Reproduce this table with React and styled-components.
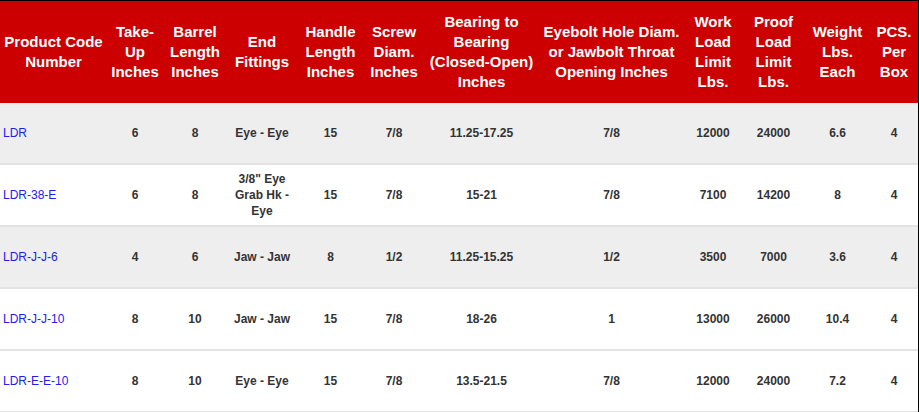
import React from "react";
import styled, { createGlobalStyle } from "styled-components";

const GlobalStyle = createGlobalStyle`
  html, body {
    margin: 0;
    padding: 0;
    background: #ffffff;
  }
  body {
    font-family: "Liberation Sans", Arial, sans-serif;
  }
`;

const widths = [107, 56, 64, 70, 67, 60, 115, 145, 58, 63, 65, 48];

const headers = [
  ["Product Code", "Number"],
  ["Take-", "Up", "Inches"],
  ["Barrel", "Length", "Inches"],
  ["End", "Fittings"],
  ["Handle", "Length", "Inches"],
  ["Screw", "Diam.", "Inches"],
  ["Bearing to", "Bearing", "(Closed-Open)", "Inches"],
  ["Eyebolt Hole Diam.", "or Jawbolt Throat", "Opening Inches"],
  ["Work", "Load", "Limit", "Lbs."],
  ["Proof", "Load", "Limit", "Lbs."],
  ["Weight", "Lbs.", "Each"],
  ["PCS.", "Per", "Box"],
];

const rows = [
  {
    code: "LDR",
    shade: true,
    cells: ["6", "8", ["Eye - Eye"], "15", "7/8", "11.25-17.25", "7/8", "12000", "24000", "6.6", "4"],
  },
  {
    code: "LDR-38-E",
    shade: false,
    cells: ["6", "8", ['3/8" Eye', "Grab Hk -", "Eye"], "15", "7/8", "15-21", "7/8", "7100", "14200", "8", "4"],
  },
  {
    code: "LDR-J-J-6",
    shade: true,
    cells: ["4", "6", ["Jaw - Jaw"], "8", "1/2", "11.25-15.25", "1/2", "3500", "7000", "3.6", "4"],
  },
  {
    code: "LDR-J-J-10",
    shade: false,
    cells: ["8", "10", ["Jaw - Jaw"], "15", "7/8", "18-26", "1", "13000", "26000", "10.4", "4"],
  },
  {
    code: "LDR-E-E-10",
    shade: false,
    cells: ["8", "10", ["Eye - Eye"], "15", "7/8", "13.5-21.5", "7/8", "12000", "24000", "7.2", "4"],
  },
];

function Lines({ lines }) {
  return lines.map((line, i) => (
    <React.Fragment key={i}>
      {i > 0 && <br />}
      {line}
    </React.Fragment>
  ));
}

export default function App() {
  return (
    <>
      <GlobalStyle />
      <Frame>
        <Table>
          <colgroup>
            {widths.map((w, i) => (
              <col key={i} style={{ width: w }} />
            ))}
          </colgroup>
          <thead>
            <tr>
              {headers.map((h, i) => (
                <HeadCell key={i}>
                  <Lines lines={h} />
                </HeadCell>
              ))}
            </tr>
          </thead>
          <tbody>
            {rows.map((row) => (
              <Row key={row.code} $shade={row.shade}>
                <CodeCell>
                  <CodeLink href="#">{row.code}</CodeLink>
                </CodeCell>
                {row.cells.map((c, i) => (
                  <Cell key={i}>{Array.isArray(c) ? <Lines lines={c} /> : c}</Cell>
                ))}
              </Row>
            ))}
          </tbody>
        </Table>
      </Frame>
    </>
  );
}

const Frame = styled.div`
  width: 918px;
  height: 411px;
  border-top: 1px solid #000000;
  border-right: 1px solid #000000;
  overflow: hidden;
  background: #ffffff;
`;

const Table = styled.table`
  width: 918px;
  table-layout: fixed;
  border-collapse: collapse;
  border-spacing: 0;
`;

const HeadCell = styled.th`
  height: 102px;
  padding: 0 2px;
  background: #cc0000;
  color: #ffffff;
  font-family: "Liberation Sans", Arial, sans-serif;
  font-size: 15px;
  font-weight: 700;
  line-height: 20px;
  text-align: center;
  vertical-align: middle;
  white-space: nowrap;
`;

const Row = styled.tr`
  background: ${(props) => (props.$shade ? "#eeeeee" : "#ffffff")};
  border-bottom: 2px solid #e3e3e3;
`;

const Cell = styled.td`
  height: 60px;
  padding: 0 2px;
  color: #333333;
  font-family: "Liberation Sans", Arial, sans-serif;
  font-size: 12px;
  font-weight: 700;
  line-height: 16px;
  text-align: center;
  vertical-align: middle;
  white-space: nowrap;
`;

const CodeCell = styled(Cell)`
  padding-left: 3px;
  text-align: left;
  font-weight: 400;
`;

const CodeLink = styled.a`
  color: #2020ee;
  text-decoration: none;
  font-size: 12px;
`;
